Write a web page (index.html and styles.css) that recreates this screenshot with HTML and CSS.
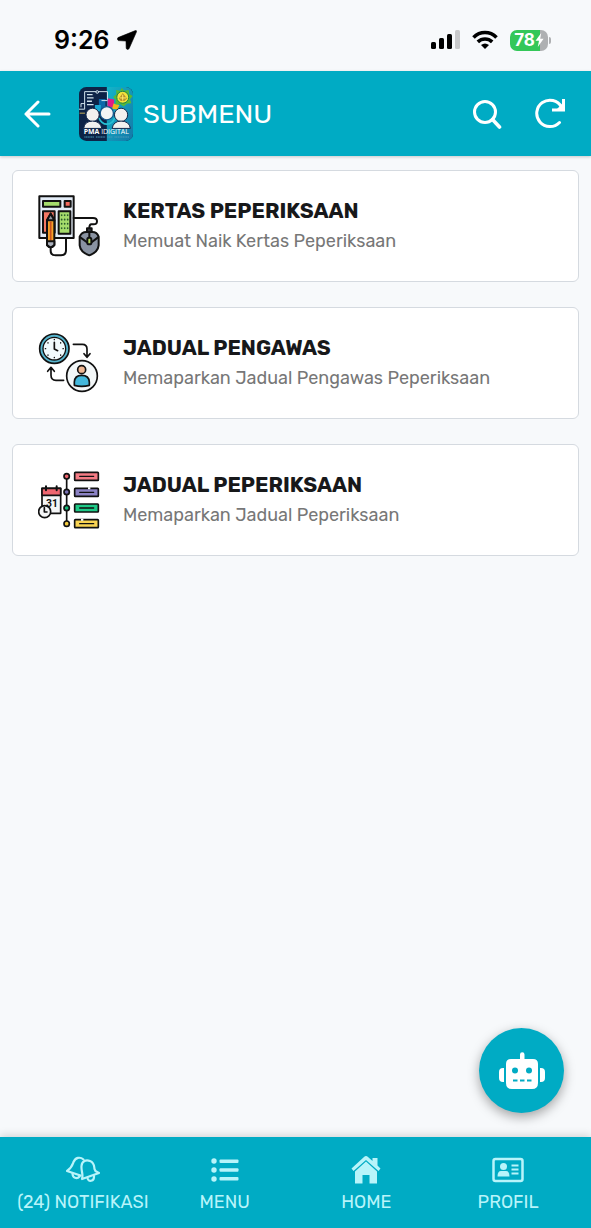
FILE: index.html
```html
<!DOCTYPE html>
<html lang="ms">
<head>
    <meta charset="UTF-8">
    <meta name="viewport" content="width=device-width, initial-scale=1.0">
    <title>Submenu - PMA iDigital</title>
    <link rel="stylesheet" href="styles.css">
</head>
<body>
    <div class="status-bar">
        <div class="status-left">
            <span class="time">9:26</span>
            <svg width="20" height="20" viewBox="0 0 20 20"><path d="M18.4 0.6 L1 7.6 Q-0.4 9.4 1.4 10.6 L9 11 L9.2 18.4 Q10.2 20.4 12 18.8 L19.5 1.8 Q19.8 0.2 18.4 0.6Z" fill="#000" stroke="#000" stroke-width="0.6"/></svg>
        </div>
        <div class="status-right">
            <svg width="29" height="20" viewBox="0 0 29 20">
                <rect x="0" y="12" width="5" height="7" rx="1.5"/>
                <rect x="8" y="8" width="5" height="11" rx="1.5"/>
                <rect x="16" y="4" width="5" height="15" rx="1.5"/>
                <rect x="24" y="0" width="5" height="19" rx="1.5" fill="#c8c9cb"/>
            </svg>
            <svg width="26" height="20" viewBox="0 0 26 20" fill="none" stroke="#000" stroke-width="3.6">
                <path d="M1.5 7.4 C8 0.8 18 0.8 24.5 7.4"/>
                <path d="M5.8 11.9 C10 8 16 8 20.2 11.9"/>
                <path d="M9 15 Q13 11.8 17 15 L13 19Z" fill="#000" stroke="none"/>
            </svg>
            <div class="battery">
                <span>78</span>
                <svg width="9" height="14" viewBox="0 0 9 14"><path d="M6.2 0 L0.5 7.8 H4 L2.8 14 L8.6 5.8 H5.2Z" fill="#fff"/></svg>
            </div>
        </div>
    </div>

    <header>
        <button class="back" aria-label="Kembali">
            <svg width="28" height="28" viewBox="0 0 28 28" fill="none" stroke="#fff" stroke-width="3" stroke-linecap="round" stroke-linejoin="round"><path d="M25 14 H2 M14 2 L2 14 L14 26"/></svg>
        </button>
        <svg class="logo" width="54" height="54" viewBox="26 20 163 163">
            <defs>
                <clipPath id="logo-clip"><rect x="26" y="20" width="163" height="163" rx="22"/></clipPath>
                <linearGradient id="logo-blue" x1="0" y1="0" x2="1" y2="1">
                    <stop offset="0" stop-color="#13b5c9"/>
                    <stop offset="1" stop-color="#1478a8"/>
                </linearGradient>
            </defs>
            <g clip-path="url(#logo-clip)">
                <rect x="26" y="20" width="163" height="163" fill="#0d2347"/>
                <path d="M110 20 H189 V183 H110Z" fill="url(#logo-blue)"/>
                <path d="M86 56 H106 V84 H86Z" fill="#0d68a9"/>
                <path d="M74 74 H92 V94 H74Z" fill="#18a9d4"/>
                <path d="M112 54 L132 58 V80 L112 84Z" fill="#e11b86"/>
                <path d="M130 70 L148 74 L142 88 L126 86Z" fill="#f1b51c"/>
                <g fill="none" stroke="#d3e4ed" stroke-width="3">
                    <path d="M26 87 H43 V34 H112 V58 M32 81 V70 H43 M94 61 H112"/>
                    <path d="M50 43 H67 M50 53 H70 M50 63 H65 M50 73 H70" stroke-width="4"/>
                    <circle cx="81" cy="35" r="4" fill="#0d2347"/>
                </g>
                <path d="M28 99 H44" stroke="#cbb15b" stroke-width="3"/>
                <path d="M155 23 L163 31 L176 29 L177 41 L188 47 L180 57 L184 69 L171 70 L161 79 L150 71 L136 73 L137 59 L129 50 L139 42 L138 29 L150 31Z" fill="#57b934"/>
                <circle cx="158" cy="51" r="18" fill="#f2e33c" stroke="#19804e" stroke-width="3"/>
                <path d="M158 38 L164 46 L171 55 L163 62 H152 L146 55 L153 46Z" fill="#b8902c"/>
                <path d="M149 53 H168 M158 43 V61" stroke="#fff06a" stroke-width="3"/>
                <circle cx="110" cy="99" r="20" fill="#f2f4f5" stroke="#15588d" stroke-width="4"/>
                <path d="M86 113 Q94 132 110 132 Q128 132 134 112" fill="none" stroke="#27bfd4" stroke-width="5"/>
                <g fill="#f2f1ef" stroke="#12264a" stroke-width="3">
                    <circle cx="67" cy="104" r="20"/>
                    <circle cx="153" cy="104" r="20"/>
                    <path d="M40 145 Q43 123 67 123 Q90 123 95 145Z"/>
                    <path d="M126 145 Q130 123 153 123 Q178 123 181 145Z"/>
                </g>
                <text x="40" y="163" class="logo-name" font-size="21">PMA <tspan class="logo-thin">IDIGITAL</tspan></text>
                <path d="M42 171 H72 M77 171 H105 M111 171 H127 M133 171 H178" stroke="#4e9ab9" stroke-width="3" stroke-dasharray="4 1"/>
            </g>
        </svg>
        <h1>SUBMENU</h1>
        <button class="search" aria-label="Cari">
            <svg width="30" height="30" viewBox="0 0 30 30" fill="none" stroke="#fff" stroke-width="3" stroke-linecap="round"><circle cx="12" cy="13" r="10.5"/><path d="M19.5 20.5 L26.5 28" stroke-width="3.6"/></svg>
        </button>
        <button aria-label="Muat semula">
            <svg width="32" height="32" viewBox="0 0 32 32" fill="none" stroke="#fff" stroke-width="3" stroke-linecap="round"><path d="M24.500 24.500 A13.200 13.200 0 1 1 26.500 9"/><path d="M28.500 1 V12 H17" stroke-linecap="butt"/><path d="M28.500 4.500 V12 H21Z" fill="#fff" stroke="none"/></svg>
        </button>
    </header>

    <main>
        <a href="#kertas" class="card">
            <svg width="64" height="64" viewBox="24 27 192 192" stroke="#111" stroke-width="6" stroke-linejoin="round" stroke-linecap="round">
                <path d="M28 34 H131 V159 H28Z" fill="#e3ecf7"/>
                <path d="M39 48 H91 V65 H39Z" fill="#a5dc6c"/>
                <path d="M104 48 H122 V65 H104Z" fill="#f4695c"/>
                <path d="M39 79 H74 V143 H39Z" fill="#f47864"/>
                <path d="M86 79 H121 V146 H86Z" fill="#a5dc6c"/>
                <path d="M95 90 V91 M104 90 V91 M113 90 V91 M95 103 V104 M104 103 V104 M113 103 V104 M95 116 V117 M104 116 V117 M113 116 V117 M95 129 V130 M104 129 V130 M113 129 V130" stroke="#285b2b" stroke-width="5"/>
                <path d="M131 99 H189 Q201 99 201 109 T189 118 H184 Q178 118 178 130" fill="none"/>
                <path d="M62 186 V197 Q62 211 77 211 H93 Q108 211 108 196 V159" fill="none"/>
                <path d="M51 106 L62 86 L73 106 V180 Q62 193 51 180Z" fill="#f5a12a"/>
                <path d="M51 106 L62 86 L73 106Z" fill="#8f98a4"/>
                <path d="M62 112 V164" stroke="#c9501f" stroke-width="5"/>
                <path d="M51 169 H73 V180 Q62 193 51 180Z" fill="#abb1bd"/>
                <path d="M171 130 H185 V142 H171Z" fill="#35383f"/>
                <path d="M149 155 Q155 141 169 141 H187 Q201 141 206 155 V181 Q204 201 178 211 Q151 201 149 181Z" fill="#8992a1"/>
                <path d="M151 157 L178 177 L204 157 M178 177 V143" fill="none"/>
                <rect x="172" y="158" width="12" height="20" rx="5" fill="#b7db62"/>
            </svg>
            <div>
                <h2>KERTAS PEPERIKSAAN</h2>
                <p>Memuat Naik Kertas Peperiksaan</p>
            </div>
        </a>
        <a href="#pengawas" class="card">
            <svg width="64" height="64" viewBox="24 18 192 192" stroke="#111" stroke-width="5" stroke-linejoin="round" stroke-linecap="round">
                <circle cx="73" cy="71" r="44" fill="#57b5ce"/>
                <circle cx="73" cy="71" r="34" fill="#f1fafd" stroke-width="4"/>
                <path d="M73 52 V72 L83 77" fill="none"/>
                <path d="M73 43 V44 M73 97 V98 M46 71 H47 M99 71 H100 M54 53 V54 M92 53 V54 M54 90 V91 M92 90 V91" stroke-width="4"/>
                <path d="M130 58 H157 Q171 58 171 72 V96 M162 86 L171 97 L180 86" fill="none"/>
                <path d="M101 166 H78 Q63 166 63 151 V128 M53 139 L63 127 L73 139" fill="none"/>
                <circle cx="156" cy="153" r="46" fill="#f3f7f8"/>
                <circle cx="155" cy="134" r="12" fill="#efb793"/>
                <path d="M133 181 V171 Q134 151 155 151 Q177 151 178 171 V181 Q155 187 133 181Z" fill="#44b8dc"/>
            </svg>
            <div>
                <h2>JADUAL PENGAWAS</h2>
                <p>Memaparkan Jadual Pengawas Peperiksaan</p>
            </div>
        </a>
        <a href="#jadual" class="card">
            <svg width="64" height="64" viewBox="24 21 192 192" stroke="#111" stroke-width="5" stroke-linejoin="round" stroke-linecap="round">
                <path d="M36 82 H92 V157 H36Z" fill="#f4f5f6"/>
                <path d="M36 82 H92 V103 H36Z" fill="#ef6670"/>
                <path d="M48 76 V88 M80 76 V88" stroke-width="6"/>
                <text x="48" y="137" class="calendar-day" font-size="31">31</text>
                <circle cx="44" cy="152" r="18" fill="#f4f5f6"/>
                <path d="M43 140 V153 H51" fill="none"/>
                <path d="M110 46 V188"/>
                <circle cx="110" cy="46" r="8" fill="#ef6670"/>
                <circle cx="110" cy="93" r="8" fill="#7770b2"/>
                <circle cx="110" cy="141" r="8" fill="#16bb79"/>
                <circle cx="110" cy="188" r="8" fill="#f3ca40"/>
                <rect x="134" y="34" width="71" height="24" rx="2" fill="#f47b84"/>
                <rect x="134" y="82" width="71" height="24" rx="2" fill="#8b82c4"/>
                <rect x="134" y="129" width="71" height="24" rx="2" fill="#1ec987"/>
                <rect x="134" y="176" width="71" height="24" rx="2" fill="#f9d453"/>
                <path d="M149 46 H191 M149 94 H191 M149 141 H191 M149 188 H191" stroke-width="4"/>
                <path d="M174 82 H181 M153 176 H160" stroke="#fff" stroke-width="6" stroke-linecap="butt"/>
            </svg>
            <div>
                <h2>JADUAL PEPERIKSAAN</h2>
                <p>Memaparkan Jadual Peperiksaan</p>
            </div>
        </a>
    </main>

    <button class="chatbot" aria-label="Chatbot">
        <svg width="46" height="38" viewBox="0 0 46 38">
            <path d="M21 2.5 A2.2 2.2 0 0 1 25.5 2.5 V7 H34 Q39 7 39 12 V31 Q39 37 33 37 H13 Q7 37 7 31 V12 Q7 7 12 7 H21Z M5 16 V30 H4 Q0 30 0 26 V20 Q0 16 4 16Z M41 16 H42 Q46 16 46 20 V26 Q46 30 42 30 H41Z" fill="#fff"/>
            <g fill="#00abc4"><circle cx="16" cy="18.5" r="3"/><circle cx="30" cy="18.5" r="3"/><path d="M14 27.5 H18.5 V29.5 H14Z M21 27.5 H25.5 V29.5 H21Z M28 27.5 H32.5 V29.5 H28Z"/></g>
        </svg>
    </button>

    <nav>
        <a href="#notifikasi">
            <svg width="34" height="28" viewBox="0 0 34 28" fill="none" stroke="currentColor" stroke-width="2.2" stroke-linejoin="round" stroke-linecap="round">
                <path d="M14.5 19.5 L1 15 C5.5 12 6 10 7.5 6 C9.500 1.500 14 0.500 17.500 3.500"/>
                <path d="M6.5 17.500 C6.500 22 11 23.500 13.500 20.500"/>
                <path d="M16 23 C17.500 18 15 15 15.500 10 C16 5 20 3.500 24 5 C28.500 6.800 28 10 28.500 13 C29 16 31.500 16 33 17 L16 23Z"/>
                <path d="M21.500 22 C22 26.500 28.500 25.500 28 20"/>
            </svg>
            <span>(24) NOTIFIKASI</span>
        </a>
        <a href="#menu">
            <svg width="28" height="28" viewBox="0 0 28 28" fill="currentColor">
                <circle cx="3" cy="5" r="2.7"/><circle cx="3" cy="14" r="2.7"/><circle cx="3" cy="23" r="2.7"/>
                <rect x="8.5" y="3.5" width="19" height="3.4" rx="1"/><rect x="8.5" y="12.3" width="19" height="3.4" rx="1"/><rect x="8.5" y="21" width="19" height="3.4" rx="1"/>
            </svg>
            <span>MENU</span>
        </a>
        <a href="#home">
            <svg width="30" height="28" viewBox="0 0 30 28" fill="currentColor">
                <path d="M15 0 Q16 0 17 1 L21.5 5 V2 H26.5 V9.5 L29.5 12.5 L27.5 15 L15 4 L2.5 15 L0.5 12.5 L13 1 Q14 0 15 0Z"/>
                <path d="M15 5.5 L26 15.5 V27.5 H18.5 V19 H11.5 V27.5 H4 V15.5Z"/>
            </svg>
            <span>HOME</span>
        </a>
        <a href="#profil">
            <svg width="32" height="28" viewBox="0 0 32 28" fill="currentColor">
                <rect x="1.5" y="3" width="29" height="22" rx="2" fill="none" stroke="currentColor" stroke-width="2.5"/>
                <circle cx="11.5" cy="10.5" r="3.5"/>
                <path d="M5.5 20.5 Q5.5 15 9 15 H14 Q17.5 15 17.5 20.5Z"/>
                <path d="M19.5 8.5 H26.5 V10.5 H19.5Z M19.5 12.5 H26.5 V14.5 H19.5Z M19.5 16.5 H26.5 V18.5 H19.5Z"/>
            </svg>
            <span>PROFIL</span>
        </a>
    </nav>
</body>
</html>
```
FILE: styles.css
```css
* {
    box-sizing: border-box;
}

body {
    font-family: Rubik, Roboto, sans-serif;
    margin: 0;
    background-color: #f7f9fb;
    min-height: 100vh;
    display: flex;
    flex-direction: column;
}

button {
    border: none;
    background: none;
    padding: 0;
    cursor: pointer;
}

svg {
    display: block;
    flex-shrink: 0;
}

.status-bar {
    display: flex;
    justify-content: space-between;
    align-items: center;
    padding: 20px 43px 11px 54px;
}

.status-left {
    display: flex;
    align-items: center;
    gap: 7px;
}

.time {
    font-family: Inter, sans-serif;
    font-size: 25px;
    line-height: 40px;
    font-weight: 600;
}

.status-right {
    display: flex;
    align-items: center;
    gap: 12px;
}

.battery {
    position: relative;
    display: flex;
    align-items: center;
    justify-content: center;
    width: 38px;
    height: 21px;
    border-radius: 7px;
    background: linear-gradient(to right, #34c759 78%, #aeb0b2 78%);
    color: white;
    font-family: Inter, sans-serif;
    font-size: 17px;
    font-weight: 700;
}

.battery::after {
    content: "";
    position: absolute;
    right: -3px;
    top: 7px;
    width: 2px;
    height: 7px;
    border-radius: 0 2px 2px 0;
    background-color: #aeb0b2;
}

header {
    background-color: #00abc4;
    color: white;
    display: flex;
    align-items: center;
    height: 85px;
    padding: 0 24px;
    box-shadow: 0 1px 3px rgba(0, 0, 0, 0.2);
}

header h1 {
    flex: 1;
    margin: 0 0 0 10px;
    font-size: 27px;
    font-weight: 400;
}

.logo {
    margin-left: 27px;
}

.logo-name {
    fill: white;
    font-family: "Open Sans", sans-serif;
    font-weight: 700;
}

.logo-thin {
    font-weight: 400;
}

.search {
    margin-right: 32px;
}

main {
    flex: 1;
    display: flex;
    flex-direction: column;
    gap: 25px;
    padding: 14px 12px;
}

.card {
    display: flex;
    align-items: center;
    gap: 21px;
    padding: 23px 25px;
    background-color: white;
    border: 1px solid #d5dae0;
    border-radius: 6px;
    color: #17181a;
    text-decoration: none;
}

.card h2 {
    margin: 0;
    font-size: 21px;
    line-height: 30px;
    font-weight: 700;
}

.card p {
    margin: 0;
    color: #777;
    font-size: 18px;
    line-height: 30px;
}

.calendar-day {
    fill: #111;
    stroke: none;
    font-family: Roboto, sans-serif;
    font-weight: 700;
}

.chatbot {
    position: fixed;
    right: 27px;
    bottom: 115px;
    width: 85px;
    height: 85px;
    display: flex;
    align-items: center;
    justify-content: center;
    border-radius: 50%;
    background-color: #00abc4;
    box-shadow: 0 4px 12px rgba(0, 0, 0, 0.35);
}

nav {
    display: flex;
    height: 91px;
    padding: 19px 12px 0;
    background-color: #00abc4;
    box-shadow: 0 -2px 8px rgba(0, 0, 0, 0.15);
}

nav a {
    flex: 1 1 0;
    display: flex;
    flex-direction: column;
    align-items: center;
    gap: 6px;
    color: #b8f4fa;
    text-decoration: none;
    font-size: 18px;
    line-height: 24px;
    white-space: nowrap;
}
```
